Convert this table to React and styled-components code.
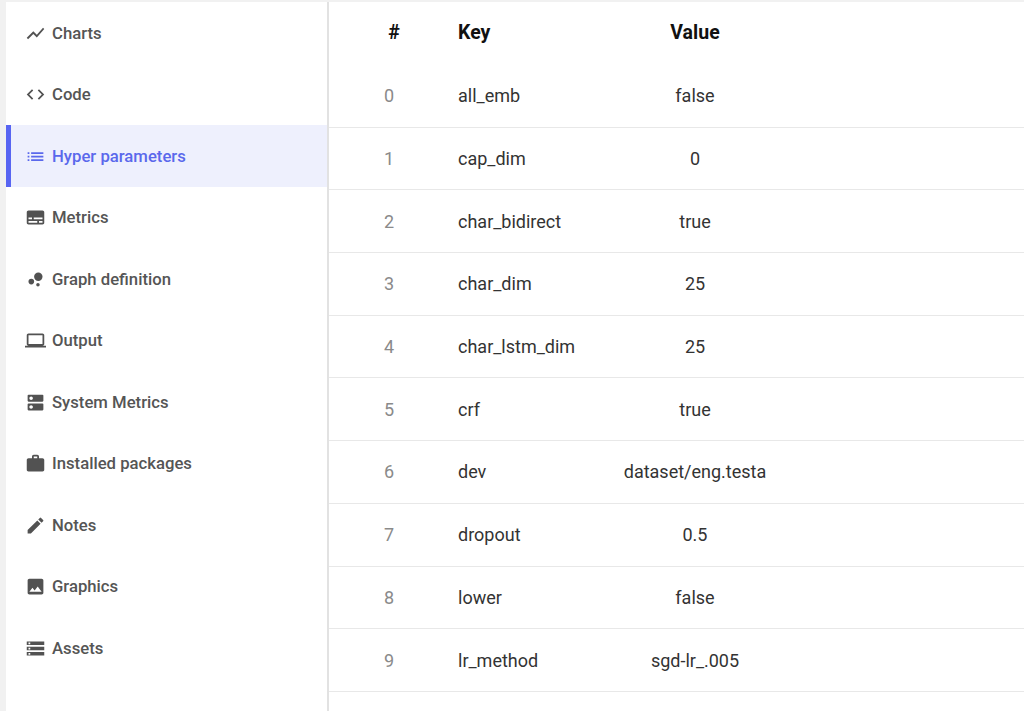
import React from "react";
import styled, { createGlobalStyle } from "styled-components";
import {
  MdShowChart,
  MdCode,
  MdList,
  MdSubtitles,
  MdBubbleChart,
  MdLaptop,
  MdDns,
  MdWork,
  MdCreate,
  MdImage,
  MdStorage,
} from "react-icons/md";

const Global = createGlobalStyle`
  html, body { margin: 0; padding: 0; }
  body {
    font-family: Roboto, "Noto Sans", "Liberation Sans", sans-serif;
    background: #f1f1f1;
    -webkit-font-smoothing: antialiased;
  }
  * { box-sizing: border-box; }
`;

const Page = styled.div`
  display: flex;
  height: 711px;
  padding: 2px 0 0 6px;
  background: #f1f1f1;
  overflow: hidden;
`;

const Sidebar = styled.nav`
  width: 323px;
  flex-shrink: 0;
  background: #ffffff;
  border-right: 2px solid #e2e2e2;
  display: flex;
  flex-direction: column;
`;

const NavItem = styled.div`
  height: 61.5px;
  display: flex;
  align-items: center;
  gap: 6px;
  padding-left: ${(p) => (p.$active ? "14px" : "19px")};
  padding-top: 1px;
  border-left: ${(p) => (p.$active ? "5px solid #5865f2" : "none")};
  background: ${(p) => (p.$active ? "#eef0fd" : "transparent")};
  color: ${(p) => (p.$active ? "#5a68ec" : "#555555")};
  font-size: 16.7px;
  font-weight: 500;
  svg {
    width: 21px;
    height: 21px;
    flex-shrink: 0;
    color: ${(p) => (p.$active ? "#5a68ec" : "#525252")};
  }
`;

const Main = styled.main`
  flex: 1;
  background: #ffffff;
  display: flex;
  flex-direction: column;
`;

const Row = styled.div`
  display: grid;
  grid-template-columns: 120px 151px 190px 1fr;
  align-items: center;
  height: ${(p) => (p.$header ? "63px" : "62.7px")};
  padding-bottom: ${(p) => (p.$header ? "3px" : "0")};
  border-bottom: ${(p) => (p.$header ? "none" : "1px solid #e8e8e8")};
  font-size: ${(p) => (p.$header ? "19.5px" : "18px")};
  font-weight: ${(p) => (p.$header ? 700 : 400)};
  color: ${(p) => (p.$header ? "#111111" : "#333333")};
`;

const NumCell = styled.div`
  text-align: center;
  color: ${(p) => (p.$header ? "#111111" : "#8a8a8a")};
  padding-left: ${(p) => (p.$header ? "10px" : "0")};
`;

const KeyCell = styled.div`
  padding-left: 9px;
  white-space: nowrap;
`;

const ValueCell = styled.div`
  text-align: center;
  white-space: nowrap;
`;

const nav = [
  { label: "Charts", Icon: MdShowChart },
  { label: "Code", Icon: MdCode },
  { label: "Hyper parameters", Icon: MdList, active: true },
  { label: "Metrics", Icon: MdSubtitles },
  { label: "Graph definition", Icon: MdBubbleChart },
  { label: "Output", Icon: MdLaptop },
  { label: "System Metrics", Icon: MdDns },
  { label: "Installed packages", Icon: MdWork },
  { label: "Notes", Icon: MdCreate },
  { label: "Graphics", Icon: MdImage },
  { label: "Assets", Icon: MdStorage },
];

const params = [
  ["all_emb", "false"],
  ["cap_dim", "0"],
  ["char_bidirect", "true"],
  ["char_dim", "25"],
  ["char_lstm_dim", "25"],
  ["crf", "true"],
  ["dev", "dataset/eng.testa"],
  ["dropout", "0.5"],
  ["lower", "false"],
  ["lr_method", "sgd-lr_.005"],
];

export default function App() {
  return (
    <>
      <Global />
      <Page>
        <Sidebar>
          {nav.map(({ label, Icon, active }) => (
            <NavItem key={label} $active={active}>
              <Icon />
              <span>{label}</span>
            </NavItem>
          ))}
        </Sidebar>
        <Main>
          <Row $header>
            <NumCell $header>#</NumCell>
            <KeyCell>Key</KeyCell>
            <ValueCell>Value</ValueCell>
            <div />
          </Row>
          {params.map(([k, v], i) => (
            <Row key={k}>
              <NumCell>{i}</NumCell>
              <KeyCell>{k}</KeyCell>
              <ValueCell>{v}</ValueCell>
              <div />
            </Row>
          ))}
        </Main>
      </Page>
    </>
  );
}
